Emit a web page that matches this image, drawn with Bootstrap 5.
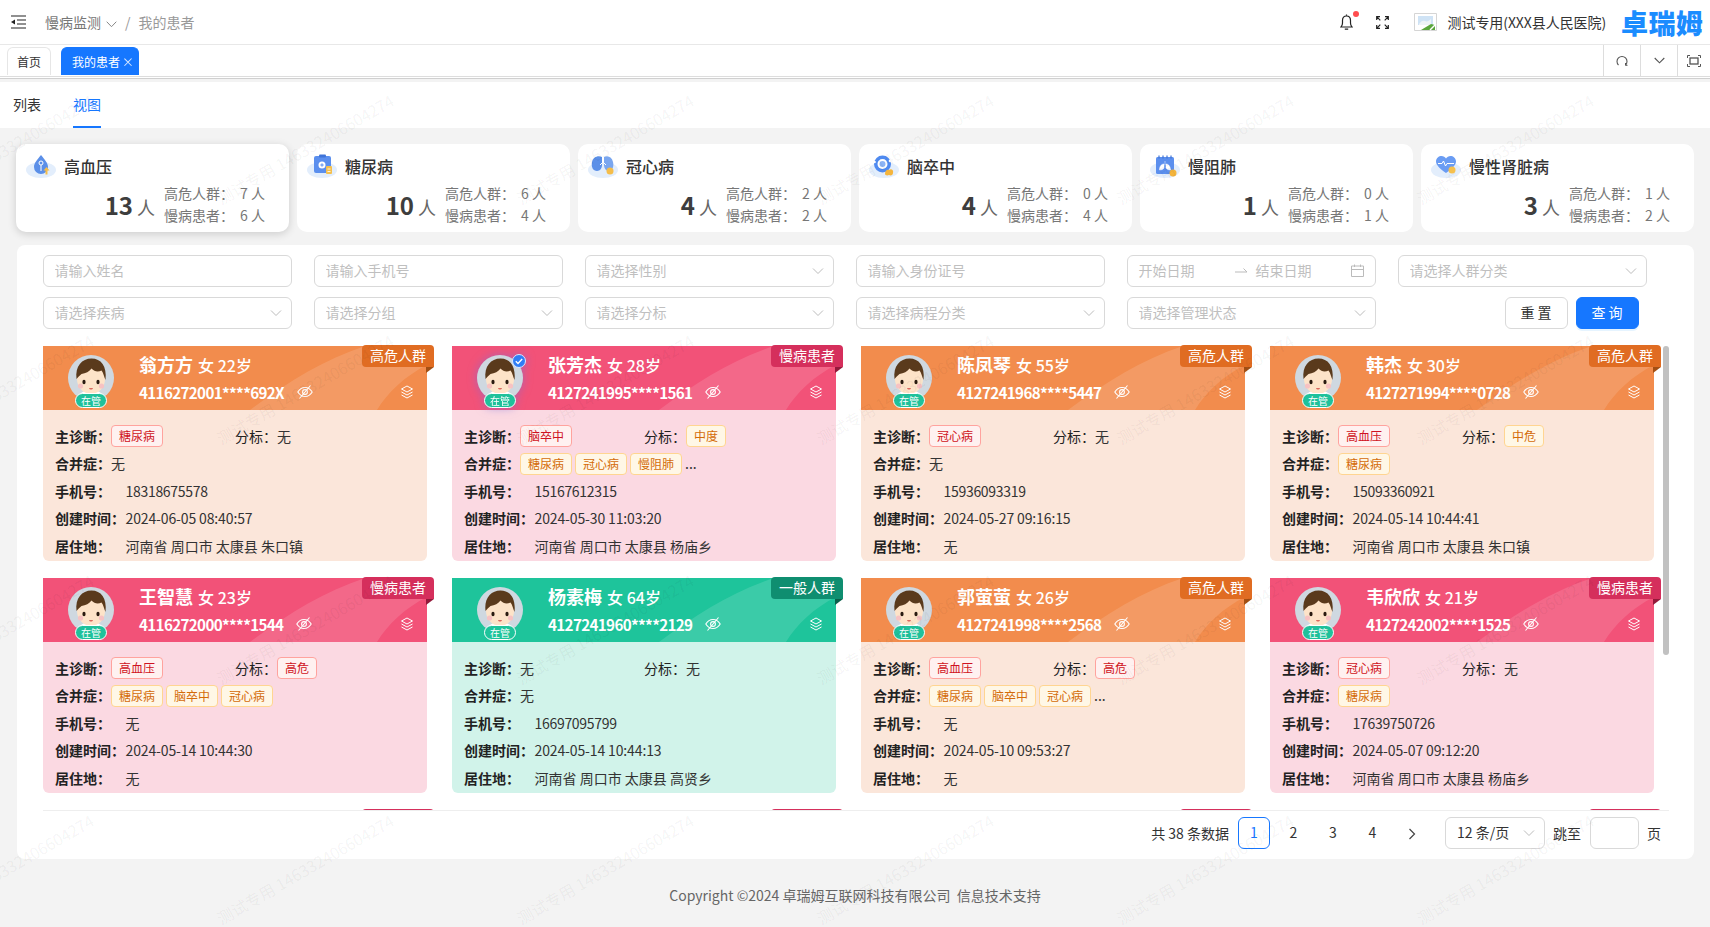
<!DOCTYPE html>
<html lang="zh-CN">
<head>
<meta charset="utf-8">
<title>我的患者</title>
<link href="https://cdn.jsdelivr.net/npm/bootstrap@5.3.0/dist/css/bootstrap.min.css" rel="stylesheet">
<style>
html,body{height:927px;overflow:hidden}
body{font-family:"Noto Sans CJK SC","Noto Sans",sans-serif;background:#f3f3f3;color:#333;font-size:14px;position:relative}
.zr-top{height:45px;background:#fff;border-bottom:1px solid #e8e8e8;padding-left:11px}
.zr-crumb{color:#777;margin:0 0 0 19px}
.zr-crumb .sep{color:#999;margin:0 8px}
.zr-crumb .cur{color:#999}
.zr-crumb svg{margin-left:5px;vertical-align:0}
.zr-hosp{color:#333;letter-spacing:-.07px;margin-left:11px}
.zr-logo{color:#1b8cff;font-size:27px;font-weight:900;line-height:1;letter-spacing:.3px;margin:0 7px 0 15px}
.zr-bell{margin-right:23px}
.zr-full{margin-right:25px}
.zr-tabs{height:32px;background:#fff;border-bottom:1px solid #ddd;box-shadow:0 1px 0 #fff,0 2px 0 #d0d0d0;padding-left:7px}
.zr-tab{height:28px;margin-top:2px;border:1px solid #e6e6e6;border-bottom:0;border-radius:6px 6px 0 0;font-size:12px;color:#333;display:flex;align-items:center;justify-content:center;width:44px}
.zr-tab.on{background:#1677ff;border-color:#1677ff;color:#fff;width:78px;margin-left:10px;justify-content:flex-start;padding-left:10px}
.zr-tab.on i{font-style:normal;margin-left:2px;opacity:.85}
.zr-tool{width:37px;height:31px;border-left:1px solid #ddd;display:flex;align-items:center;justify-content:center}
.zr-sub{height:46px;background:#fff;margin-top:5px;padding-left:13px;gap:32px}
.zr-sub span{line-height:44px;height:46px;color:#333}
.zr-sub .on{color:#1677ff;border-bottom:2px solid #1677ff}
.zr-stats{display:grid;grid-template-columns:repeat(6,1fr);gap:8px;margin:16px 16px 0}
.zr-stat{height:88px;background:#fff;border:0;border-radius:10px;padding:0 24px 0 10px}
.zr-stat.on{box-shadow:0 2px 8px rgba(0,0,0,.16)}
.zr-stat-head{height:38px;padding-top:5px;gap:8px;font-size:16px;font-weight:500;color:#333}
.zr-stat-body{gap:9px;height:50px;color:#777;line-height:22px}
.zr-count{font-size:18px;color:#666;align-self:flex-end;line-height:28px;padding-bottom:11px}
.zr-count b{font-size:24px;color:#3d3d3d;font-weight:700;margin-right:4px}
.zr-rows{width:101px}
.zr-rows div{display:flex;justify-content:space-between}
.zr-panel{height:614px;margin:13px 16px 0 17px;background:#fff;border-radius:8px;padding:10px 33px 0 25.5px}
.zr-filter{display:grid;grid-template-columns:repeat(6,249px);column-gap:22px;row-gap:10px;margin-bottom:16px}
.zr-panel .form-control,.zr-panel .form-select{height:32px;border:1px solid #d9d9d9;border-radius:6px;font-size:14px;padding:0 11px 2px;color:#bfbfbf;box-shadow:none}
.zr-panel .form-control::placeholder{color:#bfbfbf}
.zr-panel .form-select{background-image:url("data:image/svg+xml,%3Csvg xmlns='http://www.w3.org/2000/svg' viewBox='0 0 12 8'%3E%3Cpath d='M1 1.5l5 5 5-5' fill='none' stroke='%23bbb' stroke-width='1'/%3E%3C/svg%3E");background-size:12px 8px;background-position:right 9px center}
.zr-date{gap:0}
.zr-date .dt{width:96px}
.zr-date .dt2{flex:1}
.zr-acts{gap:8px;padding-right:8px}
.zr-acts .btn{width:63px;height:32px;padding:0 0 2px;font-size:14px;border-radius:6px}
.btn-outline-secondary.zr-reset{border-color:#d9d9d9;color:#333;background:#fff}
.btn-primary.zr-query{background:#1677ff;border-color:#1677ff;box-shadow:0 2px 0 rgba(5,145,255,.1)}
.zr-scroll{position:relative;height:466px;padding-top:1px;overflow:hidden;width:1626.5px;border-bottom:1px solid #eee}
.zr-thumb{position:absolute;right:0;top:1px;width:6px;height:309px;background:#c1c1c1;border-radius:3px}
.zr-grid{display:grid;grid-template-columns:repeat(4,384px);column-gap:25px;row-gap:17.5px}
.zr-card{height:214.5px;border:0;border-radius:0 0 6px 6px;position:relative;background:var(--soft);--bs-card-bg:var(--soft)}
.tone-o{--base:#f28c4d;--soft:#fbe6da;--rib:#e06c22;--fold:#a34f14}
.tone-p{--base:#f25278;--soft:#fbd9e2;--rib:#d52f5c;--fold:#93193a}
.tone-g{--base:#1ec49b;--soft:#d1f3ea;--rib:#0f8e70;--fold:#0a604b}
.zr-head{height:64px;background-color:var(--base);background-image:url("data:image/svg+xml,%3Csvg xmlns='http://www.w3.org/2000/svg' viewBox='0 0 384 64' preserveAspectRatio='none'%3E%3Cpath d='M207 64C245 36 280 14 322 0H384V19C362 30 345 46 334 64Z' fill='%23fff' fill-opacity='.13'/%3E%3C/svg%3E");background-size:100% 100%;color:#fff;padding-left:25.5px;position:relative}
.zr-ava{position:relative;width:46px;height:46px;margin-top:9px;flex:none}
.zr-ava svg.face{display:block;width:46px;height:46px}
.zr-ava.vip{filter:drop-shadow(0 0 5px rgba(120,110,220,.55))}
.zr-pill{position:absolute;left:7px;bottom:-7px;width:32px;height:15px;border-radius:8px;border:1px solid #fff;background:#1fc19b;color:#fff;font-size:10px;line-height:13px;text-align:center}
.tone-g .zr-pill{background:#1ec49b}
.zr-vip{position:absolute;right:-3px;top:-1px;width:14px;height:14px}
.zr-title{margin-left:25px;padding-top:5px}
.zr-name{font-size:18px;font-weight:700;line-height:26px;margin-bottom:3px}
.zr-sex{font-size:16px;font-weight:500;margin-left:1px}
.zr-id{font-size:15.2px;font-weight:700;line-height:22px;display:flex;align-items:center;letter-spacing:-.66px}
.zr-id svg{margin-left:13px}
.zr-layer{position:absolute;right:13px;top:39px}
.zr-rib{position:absolute;right:-7.5px;top:-1px;height:22px;padding:0 8px;line-height:21px;background:var(--rib);color:#fff;border-radius:4px 4px 0 4px;font-size:14px;z-index:1}
.zr-rib::after{content:"";position:absolute;right:0;top:100%;width:8px;height:6px;background:var(--fold);clip-path:polygon(0 0,100% 0,0 100%)}
.zr-rib.stub{width:72px}
.zr-info{padding:12.5px 8px 0 12.5px}
.zr-line{height:27.5px;display:flex;align-items:center;white-space:nowrap;color:#333}
.zr-line b{font-weight:600;color:#222}
.zr-line .wide{width:70.5px;flex:none}
.zr-half{width:180px;display:flex;align-items:center;flex:none}
.zr-tag{display:inline-block;height:22px;line-height:20px;padding:0 7px;font-size:12px;border:1px solid;border-radius:4px;margin-right:3px}
.zr-tag.r{color:#cf1322;background:#fff1f0;border-color:#ffa39e}
.zr-tag.y{color:#d46b08;background:#fff7e6;border-color:#ffd591}
.zr-num{letter-spacing:-.3px}
.zr-time{letter-spacing:-.13px}
.zr-pager{height:32px;margin-top:6px;justify-content:flex-end;color:#333}
.zr-pager .pagination{--bs-pagination-border-width:0;margin:0 0 0 9px;gap:8.5px}
.zr-pager .page-link{width:32px;height:32px;padding:0;line-height:31px;text-align:center;font-size:14px;color:#333;background:transparent;border-radius:6px}
.zr-pager .active .page-link{color:#1677ff;background:#fff;border:1px solid #1677ff;line-height:29px}
.zr-pager .form-select{width:100px;margin-left:17px;color:#333 !important}
.zr-pager .form-control{width:49px;margin:0 8px 0 9px;background:transparent}
.zr-jump{margin-left:8px}
.zr-foot{height:68px;padding-top:26px;text-align:center;color:#666;line-height:20px}
.zr-markwrap{position:absolute;left:0;top:0;width:1710px;height:927px;overflow:hidden;pointer-events:none;z-index:5}
.zr-mark{width:1800px;margin:29px 0 0 -145px;display:grid;grid-template-columns:repeat(6,300px);grid-auto-rows:240px}
.zr-mark span{display:flex;align-items:center;justify-content:center;font-size:16px;color:rgba(0,0,0,.055);transform:rotate(-30deg);white-space:nowrap}
</style>
</head>
<body>
<svg width="0" height="0" class="position-absolute">
  <symbol id="face" viewBox="0 0 46 46">
    <circle cx="23" cy="23" r="23" fill="#cfd8e0"/>
    <path d="M9 46c0-7 6-11 14-11s14 4 14 11z" fill="#fff"/>
    <ellipse cx="23" cy="24" rx="14" ry="15" fill="#fde3c8"/>
    <path d="M8.500 24C7 11 14 3.500 23.500 3.500S39 11 37.500 25c-1.500-3-2-7-4-9.500-3 1.500-7 1.500-10-2-2 3-6 5-10 5.500-2 1.500-3 3-5 5z" fill="#5a3a1c"/>
    <ellipse cx="16" cy="27" rx="1.600" ry="2.200" fill="#2a1a10"/>
    <ellipse cx="30" cy="27" rx="1.600" ry="2.200" fill="#2a1a10"/>
    <circle cx="12.500" cy="31" r="2.600" fill="#f7c2c2"/>
    <circle cx="33.500" cy="31" r="2.600" fill="#f7c2c2"/>
    <path d="M21 33h4c-.5 2-3.500 2-4 0z" fill="#d9695f"/>
  </symbol>
  <symbol id="eyeoff" viewBox="0 0 16 16">
    <path d="M.8 8C2.600 5 5 3.500 8 3.500S13.400 5 15.200 8C13.400 11 11 12.500 8 12.500S2.600 11 .8 8z" fill="none" stroke="#fff" stroke-width="1.100"/>
    <circle cx="8" cy="8" r="2.400" fill="none" stroke="#fff" stroke-width="1.100"/>
    <path d="M13.500 1.500 2.500 14.500" stroke="#fff" stroke-width="1.100"/>
  </symbol>
  <symbol id="layers" viewBox="0 0 14 14">
    <path d="M7 1l5.500 3L7 7 1.500 4z M1.500 7 7 10l5.500-3 M1.500 10 7 13l5.500-3" fill="none" stroke="#fff" stroke-width="1" stroke-linejoin="round"/>
  </symbol>
</svg>

<header class="zr-top d-flex align-items-center">
  <svg width="15" height="14" viewBox="0 0 15 14"><path d="M0 1h15M6 5h9M6 9h9M0 13h15" stroke="#222" stroke-width="1.200"/><path d="M0 7l4-2.600v5.200z" fill="#222"/></svg>
  <nav class="zr-crumb" aria-label="breadcrumb"><span>慢病监测<svg width="11" height="7" viewBox="0 0 11 7"><path d="M.7.700l4.800 5 4.800-5" fill="none" stroke="#888"/></svg></span><span class="sep">/</span><span class="cur">我的患者</span></nav>
  <div class="ms-auto d-flex align-items-center">
    <span class="position-relative d-flex zr-bell">
      <svg width="13" height="17" viewBox="0 0 13 17"><path d="M1 13c1-1 1.500-2 1.500-4V6.500C2.500 3.500 4 2 6.500 2s4 1.500 4 4.500V9c0 2 .5 3 1.500 4z" fill="none" stroke="#222" stroke-width="1.200"/><path d="M4.800 15.200h3.400M6.500 .6v1.200" stroke="#222" stroke-width="1.200"/></svg>
      <span class="position-absolute rounded-circle" style="width:6px;height:6px;background:#ff4d4f;left:13px;top:-3px"></span>
    </span>
    <svg width="13" height="13" viewBox="0 0 13 13" class="zr-full"><path d="M.7 4V.7H4M.7.700l3.600 3.600M9 .7h3.300V4M12.300.700 8.700 4.300M.7 9v3.300H4M.7 12.300l3.600-3.600M12.300 9v3.300H9M12.300 12.300 8.700 8.700" fill="none" stroke="#222" stroke-width="1.200"/></svg>
    <svg width="23" height="18" viewBox="0 0 23 18"><path d="M.5.500H22.500V17.500H.5z" fill="#fff" stroke="#d5d5d5"/><path d="M4 3h15v9H4z" fill="#cfe3f5"/><path d="M5 11c2-3 4-4 6-3 2 1 4 0 6-2v6H5z" fill="#eef3f7"/><path d="M7 17l10-6 4 1v5z" fill="#5aa63c"/><path d="M16 17l6-6" stroke="#fff" stroke-width="1.500"/></svg>
    <span class="zr-hosp">测试专用(XXX县人民医院)</span>
    <span class="zr-logo">卓瑞姆</span>
  </div>
</header>

<div class="zr-tabs d-flex align-items-start">
  <div class="zr-tab">首页</div>
  <div class="zr-tab on">我的患者<i>×</i></div>
  <div class="ms-auto d-flex">
    <div class="zr-tool"><svg width="12" height="13" viewBox="0 0 12 13"><path d="M2.500 11A5 5 0 1 1 9.500 11" fill="none" stroke="#555" stroke-width="1.100"/><path d="M9.500 9v2.300h2" fill="none" stroke="#555"/></svg></div>
    <div class="zr-tool"><svg width="11" height="7" viewBox="0 0 11 7"><path d="M.7 1l4.800 4.800L10.300 1" fill="none" stroke="#555" stroke-width="1.100"/></svg></div>
    <div class="zr-tool" style="width:33px"><svg width="14" height="12" viewBox="0 0 14 12"><path d="M.5 3V.5H3M11 .5h2.500V3M.5 9v2.500H3M11 11.500h2.500V9" fill="none" stroke="#555"/><rect x="3" y="3" width="8" height="6" fill="none" stroke="#555" stroke-width="1.300"/></svg></div>
  </div>
</div>

<div class="zr-sub d-flex"><span>列表</span><span class="on">视图</span></div>

<section class="zr-stats">
  <div class="card zr-stat on">
    <div class="zr-stat-head d-flex align-items-center">
      <svg width="30" height="24" viewBox="0 0 30 24"><ellipse cx="15" cy="16" rx="15" ry="8" fill="#e3eefc"/><path d="M15 1c-4 5-7 8-7 12a7 7 0 0 0 14 0c0-4-3-7-7-12z" fill="#5b8fe8"/><circle cx="15" cy="9" r="2" fill="none" stroke="#fff"/><path d="M15 11v6" stroke="#fff"/><path d="M20.500 13l3 3.500h-2v4h-2v-4h-2z" fill="#f5bd4a"/></svg>
      <span>高血压</span>
    </div>
    <div class="zr-stat-body d-flex justify-content-end">
      <div class="zr-count"><b>13</b>人</div>
      <div class="zr-rows"><div><span>高危人群：</span><span>7 人</span></div><div><span>慢病患者：</span><span>6 人</span></div></div>
    </div>
  </div>
  <div class="card zr-stat">
    <div class="zr-stat-head d-flex align-items-center">
      <svg width="30" height="24" viewBox="0 0 30 24"><ellipse cx="15" cy="16" rx="15" ry="8" fill="#e3eefc"/><rect x="7" y="2" width="17" height="17" rx="2" fill="#5b8fee"/><rect x="12" y=".5" width="7" height="3" rx="1" fill="#3f74d8"/><circle cx="15" cy="11" r="3.500" fill="#fff"/><path d="M13.300 11h3.400M15 9.300v3.400" stroke="#5b8fee"/><rect x="19" y="12" width="6" height="8" rx="1" fill="#f5c04e"/><path d="M20.500 15h3M20.500 17.500h3" stroke="#fff" stroke-width=".8"/></svg>
      <span>糖尿病</span>
    </div>
    <div class="zr-stat-body d-flex justify-content-end">
      <div class="zr-count"><b>10</b>人</div>
      <div class="zr-rows"><div><span>高危人群：</span><span>6 人</span></div><div><span>慢病患者：</span><span>4 人</span></div></div>
    </div>
  </div>
  <div class="card zr-stat">
    <div class="zr-stat-head d-flex align-items-center">
      <svg width="30" height="24" viewBox="0 0 30 24"><ellipse cx="15" cy="16" rx="15" ry="8" fill="#e3eefc"/><path d="M14 3C10 1 5 3 4 8c-1 5 1 9 5 9 3 0 5-3 5-6z" fill="#5b8fe8"/><path d="M16 3c4-2 8 0 9 5 1 4 0 8-4 9-3 0-5-3-5-6z" fill="#7aa6ef"/><path d="M15 2v7M15 8l-3 3M15 8l3 3" stroke="#fff"/><circle cx="22" cy="17" r="3.500" fill="#f5bd4a"/></svg>
      <span>冠心病</span>
    </div>
    <div class="zr-stat-body d-flex justify-content-end">
      <div class="zr-count"><b>4</b>人</div>
      <div class="zr-rows"><div><span>高危人群：</span><span>2 人</span></div><div><span>慢病患者：</span><span>2 人</span></div></div>
    </div>
  </div>
  <div class="card zr-stat">
    <div class="zr-stat-head d-flex align-items-center">
      <svg width="30" height="24" viewBox="0 0 30 24"><ellipse cx="15" cy="16" rx="15" ry="8" fill="#e3eefc"/><circle cx="13.500" cy="10" r="8.500" fill="#4f8af0"/><circle cx="13.500" cy="10" r="5" fill="#fff"/><circle cx="13.500" cy="10" r="3" fill="#8cb4f5"/><circle cx="5.500" cy="8" r="1.300" fill="#fff"/><circle cx="21" cy="7" r="1.300" fill="#fff"/><path d="M16 20c0-3 2-5 4-4 2-2 5 0 4 3 0 2-2 3-4 2-2 1-4 0-4-1z" fill="#f5b53d"/></svg>
      <span>脑卒中</span>
    </div>
    <div class="zr-stat-body d-flex justify-content-end">
      <div class="zr-count"><b>4</b>人</div>
      <div class="zr-rows"><div><span>高危人群：</span><span>0 人</span></div><div><span>慢病患者：</span><span>4 人</span></div></div>
    </div>
  </div>
  <div class="card zr-stat">
    <div class="zr-stat-head d-flex align-items-center">
      <svg width="30" height="24" viewBox="0 0 30 24"><ellipse cx="15" cy="16" rx="15" ry="8" fill="#e3eefc"/><rect x="6" y="3" width="18" height="17" rx="1.500" fill="#5b8fee"/><path d="M9 1.500v3M13 1.500v3M17 1.500v3M21 1.500v3" stroke="#3f74d8" stroke-width="1.200"/><path d="M15 7v4M14 10c-3 0-4.500 3-4.500 6 2 0 4-1 4.500-2zM16 10c3 0 4.500 3 4.500 6-2 0-4-1-4.500-2z" fill="#fff" stroke="#fff" stroke-width=".5"/><circle cx="23" cy="19" r="3.500" fill="#f5b53d"/></svg>
      <span>慢阻肺</span>
    </div>
    <div class="zr-stat-body d-flex justify-content-end">
      <div class="zr-count"><b>1</b>人</div>
      <div class="zr-rows"><div><span>高危人群：</span><span>0 人</span></div><div><span>慢病患者：</span><span>1 人</span></div></div>
    </div>
  </div>
  <div class="card zr-stat">
    <div class="zr-stat-head d-flex align-items-center">
      <svg width="30" height="24" viewBox="0 0 30 24"><ellipse cx="15" cy="16" rx="15" ry="8" fill="#e3eefc"/><path d="M15 19C9 15 5 11 5 7.500 5 4 8 2 10.500 2c2 0 3.500 1 4.500 2.500C16 3 17.500 2 19.500 2 22 2 25 4 25 7.500 25 11 21 15 15 19z" fill="#6a9cf3"/><path d="M7 9.500h4l1.500-2.500 2 5 1.500-2.500h7" fill="none" stroke="#fff"/><circle cx="21" cy="16" r="3.500" fill="#f5c04e"/></svg>
      <span>慢性肾脏病</span>
    </div>
    <div class="zr-stat-body d-flex justify-content-end">
      <div class="zr-count"><b>3</b>人</div>
      <div class="zr-rows"><div><span>高危人群：</span><span>1 人</span></div><div><span>慢病患者：</span><span>2 人</span></div></div>
    </div>
  </div>
</section>

<main class="zr-panel">
  <form class="zr-filter">
    <input class="form-control" placeholder="请输入姓名">
    <input class="form-control" placeholder="请输入手机号">
    <select class="form-select"><option>请选择性别</option></select>
    <input class="form-control" placeholder="请输入身份证号">
    <div class="form-control zr-date d-flex align-items-center">
      <span class="dt">开始日期</span>
      <svg width="13" height="7" viewBox="0 0 13 7" class="me-2"><path d="M0 5h12M8.500 1.500 12 5" fill="none" stroke="#bbb"/></svg>
      <span class="dt2">结束日期</span>
      <svg width="13" height="13" viewBox="0 0 13 13"><path d="M.5 2H12.500V12.500H.5zM.5 5.500H12.500M3.500.5V3M9.500.5V3" fill="none" stroke="#bbb"/></svg>
    </div>
    <select class="form-select"><option>请选择人群分类</option></select>
    <select class="form-select"><option>请选择疾病</option></select>
    <select class="form-select"><option>请选择分组</option></select>
    <select class="form-select"><option>请选择分标</option></select>
    <select class="form-select"><option>请选择病程分类</option></select>
    <select class="form-select"><option>请选择管理状态</option></select>
    <div class="zr-acts d-flex justify-content-end">
      <button type="button" class="btn btn-outline-secondary zr-reset">重 置</button>
      <button type="button" class="btn btn-primary zr-query">查 询</button>
    </div>
  </form>

  <div class="zr-scroll">
    <div class="zr-grid">

      <article class="card zr-card tone-o">
        <span class="zr-rib">高危人群</span>
        <div class="zr-head d-flex">
          <div class="zr-ava"><svg class="face"><use href="#face"/></svg><span class="zr-pill">在管</span></div>
          <div class="zr-title"><div class="zr-name">翁方方 <span class="zr-sex">女 22岁</span></div><div class="zr-id">4116272001****692X<svg width="16" height="16"><use href="#eyeoff"/></svg></div></div>
          <svg class="zr-layer" width="14" height="14"><use href="#layers"/></svg>
        </div>
        <div class="zr-info">
          <div class="zr-line"><div class="zr-half"><b>主诊断：</b><span class="zr-tag r">糖尿病</span></div><b class="fw-normal">分标：</b><span>无</span></div>
          <div class="zr-line"><b>合并症：</b><span>无</span></div>
          <div class="zr-line"><b class="wide">手机号：</b><span class="zr-num">18318675578</span></div>
          <div class="zr-line"><b class="wide">创建时间：</b><span class="zr-time">2024-06-05 08:40:57</span></div>
          <div class="zr-line"><b class="wide">居住地：</b><span>河南省 周口市 太康县 朱口镇</span></div>
        </div>
      </article>

      <article class="card zr-card tone-p">
        <span class="zr-rib">慢病患者</span>
        <div class="zr-head d-flex">
          <div class="zr-ava vip"><svg class="face"><use href="#face"/></svg><svg class="zr-vip" viewBox="0 0 14 14"><circle cx="7" cy="7" r="6.500" fill="#2f7df6" stroke="#dbe8ff"/><path d="M3.800 7.200 6 9.400l4.200-4.400" fill="none" stroke="#fff" stroke-width="1.400"/></svg><span class="zr-pill">在管</span></div>
          <div class="zr-title"><div class="zr-name">张芳杰 <span class="zr-sex">女 28岁</span></div><div class="zr-id">4127241995****1561<svg width="16" height="16"><use href="#eyeoff"/></svg></div></div>
          <svg class="zr-layer" width="14" height="14"><use href="#layers"/></svg>
        </div>
        <div class="zr-info">
          <div class="zr-line"><div class="zr-half"><b>主诊断：</b><span class="zr-tag r">脑卒中</span></div><b class="fw-normal">分标：</b><span class="zr-tag y">中度</span></div>
          <div class="zr-line"><b>合并症：</b><span class="zr-tag y">糖尿病</span><span class="zr-tag y">冠心病</span><span class="zr-tag y">慢阻肺</span><span>...</span></div>
          <div class="zr-line"><b class="wide">手机号：</b><span class="zr-num">15167612315</span></div>
          <div class="zr-line"><b class="wide">创建时间：</b><span class="zr-time">2024-05-30 11:03:20</span></div>
          <div class="zr-line"><b class="wide">居住地：</b><span>河南省 周口市 太康县 杨庙乡</span></div>
        </div>
      </article>

      <article class="card zr-card tone-o">
        <span class="zr-rib">高危人群</span>
        <div class="zr-head d-flex">
          <div class="zr-ava"><svg class="face"><use href="#face"/></svg><span class="zr-pill">在管</span></div>
          <div class="zr-title"><div class="zr-name">陈凤琴 <span class="zr-sex">女 55岁</span></div><div class="zr-id">4127241968****5447<svg width="16" height="16"><use href="#eyeoff"/></svg></div></div>
          <svg class="zr-layer" width="14" height="14"><use href="#layers"/></svg>
        </div>
        <div class="zr-info">
          <div class="zr-line"><div class="zr-half"><b>主诊断：</b><span class="zr-tag r">冠心病</span></div><b class="fw-normal">分标：</b><span>无</span></div>
          <div class="zr-line"><b>合并症：</b><span>无</span></div>
          <div class="zr-line"><b class="wide">手机号：</b><span class="zr-num">15936093319</span></div>
          <div class="zr-line"><b class="wide">创建时间：</b><span class="zr-time">2024-05-27 09:16:15</span></div>
          <div class="zr-line"><b class="wide">居住地：</b><span>无</span></div>
        </div>
      </article>

      <article class="card zr-card tone-o">
        <span class="zr-rib">高危人群</span>
        <div class="zr-head d-flex">
          <div class="zr-ava"><svg class="face"><use href="#face"/></svg><span class="zr-pill">在管</span></div>
          <div class="zr-title"><div class="zr-name">韩杰 <span class="zr-sex">女 30岁</span></div><div class="zr-id">4127271994****0728<svg width="16" height="16"><use href="#eyeoff"/></svg></div></div>
          <svg class="zr-layer" width="14" height="14"><use href="#layers"/></svg>
        </div>
        <div class="zr-info">
          <div class="zr-line"><div class="zr-half"><b>主诊断：</b><span class="zr-tag r">高血压</span></div><b class="fw-normal">分标：</b><span class="zr-tag y">中危</span></div>
          <div class="zr-line"><b>合并症：</b><span class="zr-tag y">糖尿病</span></div>
          <div class="zr-line"><b class="wide">手机号：</b><span class="zr-num">15093360921</span></div>
          <div class="zr-line"><b class="wide">创建时间：</b><span class="zr-time">2024-05-14 10:44:41</span></div>
          <div class="zr-line"><b class="wide">居住地：</b><span>河南省 周口市 太康县 朱口镇</span></div>
        </div>
      </article>

      <article class="card zr-card tone-p">
        <span class="zr-rib">慢病患者</span>
        <div class="zr-head d-flex">
          <div class="zr-ava"><svg class="face"><use href="#face"/></svg><span class="zr-pill">在管</span></div>
          <div class="zr-title"><div class="zr-name">王智慧 <span class="zr-sex">女 23岁</span></div><div class="zr-id">4116272000****1544<svg width="16" height="16"><use href="#eyeoff"/></svg></div></div>
          <svg class="zr-layer" width="14" height="14"><use href="#layers"/></svg>
        </div>
        <div class="zr-info">
          <div class="zr-line"><div class="zr-half"><b>主诊断：</b><span class="zr-tag r">高血压</span></div><b class="fw-normal">分标：</b><span class="zr-tag r">高危</span></div>
          <div class="zr-line"><b>合并症：</b><span class="zr-tag y">糖尿病</span><span class="zr-tag y">脑卒中</span><span class="zr-tag y">冠心病</span></div>
          <div class="zr-line"><b class="wide">手机号：</b><span>无</span></div>
          <div class="zr-line"><b class="wide">创建时间：</b><span class="zr-time">2024-05-14 10:44:30</span></div>
          <div class="zr-line"><b class="wide">居住地：</b><span>无</span></div>
        </div>
      </article>

      <article class="card zr-card tone-g">
        <span class="zr-rib">一般人群</span>
        <div class="zr-head d-flex">
          <div class="zr-ava"><svg class="face"><use href="#face"/></svg><span class="zr-pill">在管</span></div>
          <div class="zr-title"><div class="zr-name">杨素梅 <span class="zr-sex">女 64岁</span></div><div class="zr-id">4127241960****2129<svg width="16" height="16"><use href="#eyeoff"/></svg></div></div>
          <svg class="zr-layer" width="14" height="14"><use href="#layers"/></svg>
        </div>
        <div class="zr-info">
          <div class="zr-line"><div class="zr-half"><b>主诊断：</b><span>无</span></div><b class="fw-normal">分标：</b><span>无</span></div>
          <div class="zr-line"><b>合并症：</b><span>无</span></div>
          <div class="zr-line"><b class="wide">手机号：</b><span class="zr-num">16697095799</span></div>
          <div class="zr-line"><b class="wide">创建时间：</b><span class="zr-time">2024-05-14 10:44:13</span></div>
          <div class="zr-line"><b class="wide">居住地：</b><span>河南省 周口市 太康县 高贤乡</span></div>
        </div>
      </article>

      <article class="card zr-card tone-o">
        <span class="zr-rib">高危人群</span>
        <div class="zr-head d-flex">
          <div class="zr-ava"><svg class="face"><use href="#face"/></svg><span class="zr-pill">在管</span></div>
          <div class="zr-title"><div class="zr-name">郭萤萤 <span class="zr-sex">女 26岁</span></div><div class="zr-id">4127241998****2568<svg width="16" height="16"><use href="#eyeoff"/></svg></div></div>
          <svg class="zr-layer" width="14" height="14"><use href="#layers"/></svg>
        </div>
        <div class="zr-info">
          <div class="zr-line"><div class="zr-half"><b>主诊断：</b><span class="zr-tag r">高血压</span></div><b class="fw-normal">分标：</b><span class="zr-tag r">高危</span></div>
          <div class="zr-line"><b>合并症：</b><span class="zr-tag y">糖尿病</span><span class="zr-tag y">脑卒中</span><span class="zr-tag y">冠心病</span><span>...</span></div>
          <div class="zr-line"><b class="wide">手机号：</b><span>无</span></div>
          <div class="zr-line"><b class="wide">创建时间：</b><span class="zr-time">2024-05-10 09:53:27</span></div>
          <div class="zr-line"><b class="wide">居住地：</b><span>无</span></div>
        </div>
      </article>

      <article class="card zr-card tone-p">
        <span class="zr-rib">慢病患者</span>
        <div class="zr-head d-flex">
          <div class="zr-ava"><svg class="face"><use href="#face"/></svg><span class="zr-pill">在管</span></div>
          <div class="zr-title"><div class="zr-name">韦欣欣 <span class="zr-sex">女 21岁</span></div><div class="zr-id">4127242002****1525<svg width="16" height="16"><use href="#eyeoff"/></svg></div></div>
          <svg class="zr-layer" width="14" height="14"><use href="#layers"/></svg>
        </div>
        <div class="zr-info">
          <div class="zr-line"><div class="zr-half"><b>主诊断：</b><span class="zr-tag r">冠心病</span></div><b class="fw-normal">分标：</b><span>无</span></div>
          <div class="zr-line"><b>合并症：</b><span class="zr-tag y">糖尿病</span></div>
          <div class="zr-line"><b class="wide">手机号：</b><span class="zr-num">17639750726</span></div>
          <div class="zr-line"><b class="wide">创建时间：</b><span class="zr-time">2024-05-07 09:12:20</span></div>
          <div class="zr-line"><b class="wide">居住地：</b><span>河南省 周口市 太康县 杨庙乡</span></div>
        </div>
      </article>

      <article class="card zr-card tone-p"><span class="zr-rib stub"></span></article>
      <article class="card zr-card tone-p"><span class="zr-rib stub"></span></article>
      <article class="card zr-card tone-p"><span class="zr-rib stub"></span></article>
      <article class="card zr-card tone-p"><span class="zr-rib stub"></span></article>
    </div>
    <div class="zr-thumb"></div>
  </div>

  <div class="zr-pager d-flex align-items-center">
    <span>共 38 条数据</span>
    <ul class="pagination">
      <li class="page-item active"><a class="page-link">1</a></li>
      <li class="page-item"><a class="page-link">2</a></li>
      <li class="page-item"><a class="page-link">3</a></li>
      <li class="page-item"><a class="page-link">4</a></li>
      <li class="page-item"><a class="page-link"><svg width="8" height="12" viewBox="0 0 8 12"><path d="M1.500 1l5 5-5 5" fill="none" stroke="#444" stroke-width="1.200"/></svg></a></li>
    </ul>
    <select class="form-select"><option>12 条/页</option></select>
    <span class="zr-jump">跳至</span>
    <input class="form-control">
    <span>页</span>
  </div>
</main>

<footer class="zr-foot">Copyright ©2024 卓瑞姆互联网科技有限公司&nbsp; 信息技术支持</footer>

<div class="zr-markwrap"><div class="zr-mark" id="zrMark"></div></div>
<script src="https://cdn.jsdelivr.net/npm/bootstrap@5.3.0/dist/js/bootstrap.bundle.min.js"></script>
<script>
var m=document.getElementById('zrMark'),h='';
for(var i=0;i<24;i++){h+='<span>测试专用 146332406604274</span>';}
m.innerHTML=h;
</script>
</body>
</html>
